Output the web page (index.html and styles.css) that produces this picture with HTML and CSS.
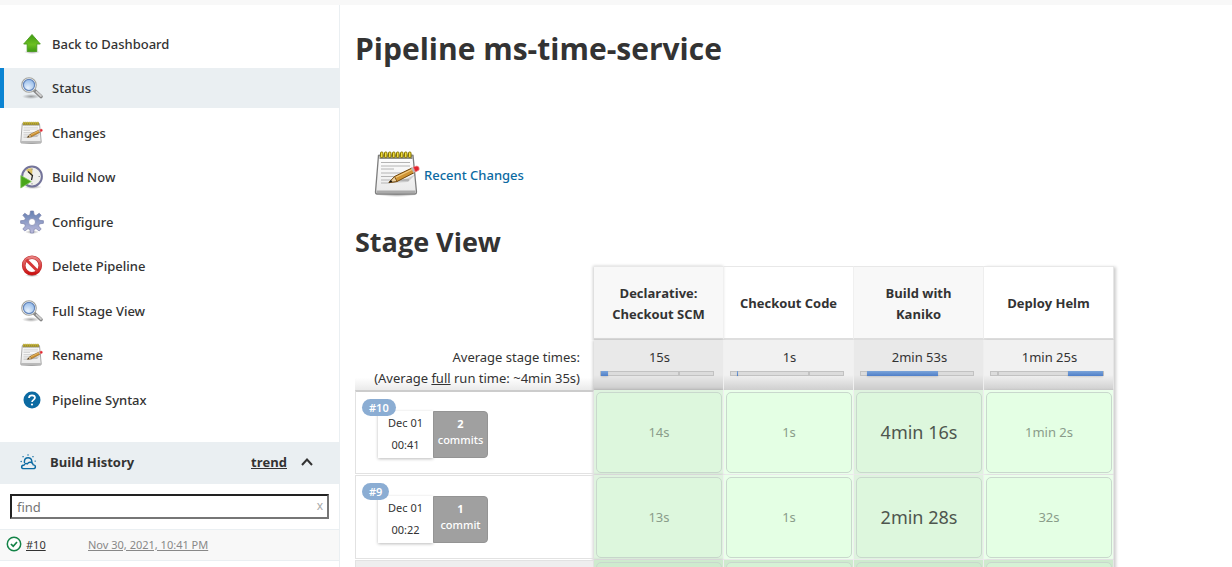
FILE: index.html
```html
<!DOCTYPE html>
<html lang="en">
<head>
<meta charset="utf-8">
<title>Pipeline ms-time-service</title>
<link rel="stylesheet" href="styles.css">
</head>
<body>
<svg class="defs" aria-hidden="true">
  <defs>
    <linearGradient id="g-arrow" x1="0" y1="0" x2="0" y2="1"><stop offset="0" stop-color="#3f9a12"/><stop offset=".6" stop-color="#6cc022"/><stop offset="1" stop-color="#3d9a12"/></linearGradient>
    <linearGradient id="g-paper" x1="0" y1="0" x2="0" y2="1"><stop offset="0" stop-color="#fff"/><stop offset="1" stop-color="#e8e8e8"/></linearGradient>
    <linearGradient id="g-gear" x1="0" y1="0" x2="0" y2="1"><stop offset="0" stop-color="#6480b2"/><stop offset="1" stop-color="#bdbbdc"/></linearGradient>
    <linearGradient id="g-red" x1="0" y1="0" x2="0" y2="1"><stop offset="0" stop-color="#e88080"/><stop offset="1" stop-color="#cc1212"/></linearGradient>
    <radialGradient id="g-lens" cx=".4" cy=".75" r=".8"><stop offset="0" stop-color="#e8f2fd"/><stop offset="1" stop-color="#8db6e8"/></radialGradient>
    <radialGradient id="g-shade"><stop offset="0" stop-color="#000" stop-opacity=".35"/><stop offset="1" stop-color="#000" stop-opacity="0"/></radialGradient>
    <symbol id="i-search" viewBox="0 0 24 24">
      <ellipse cx="11" cy="20.500" rx="9" ry="2.500" fill="url(#g-shade)"/>
      <path d="M14.500 14.500L21 20.500" stroke="#858585" stroke-width="3.600" stroke-linecap="round"/>
      <path d="M16.500 15.800L21 20" stroke="#cfcfcf" stroke-width="1.800" stroke-linecap="round"/>
      <circle cx="9" cy="9" r="7.300" fill="#fff" stroke="#a3a39d" stroke-width="1.100"/>
      <circle cx="9" cy="9" r="5.600" fill="url(#g-lens)" stroke="#6587bc" stroke-width="1.200"/>
    </symbol>
    <symbol id="i-notepad" viewBox="0 0 48 48">
      <ellipse cx="23" cy="44.500" rx="20" ry="2.500" fill="url(#g-shade)"/>
      <path d="M4.500 5.500H39L42.500 42Q42.500 44 41 44H3Q1.500 44 1.500 42Z" fill="url(#g-paper)" stroke="#7d7d7d" stroke-width="1.300"/>
      <path d="M5.500 4.500H38.500V9H5.500Z" fill="#8d8d86"/>
      <path d="M2.500 40.500H41.500V43H2.500Z" fill="#aaa"/>
      <path d="M7 12.500H36M7 16H36M7 19H20M7 23H35M7 26.500H23M7 30H35M7 33H16" stroke="#b4b4b4" stroke-width="1"/>
      <g fill="#f0dc3c" stroke="#857300" stroke-width="1"><rect x="6.500" y="2" width="2.500" height="5.500" rx="1"/><rect x="10.500" y="2" width="2.500" height="5.500" rx="1"/><rect x="14.500" y="2" width="2.500" height="5.500" rx="1"/><rect x="18.500" y="2" width="2.500" height="5.500" rx="1"/><rect x="22.500" y="2" width="2.500" height="5.500" rx="1"/><rect x="26.500" y="2" width="2.500" height="5.500" rx="1"/><rect x="30.500" y="2" width="2.500" height="5.500" rx="1"/><rect x="34.500" y="2" width="2.500" height="5.500" rx="1"/></g>
      <path d="M16 33L34 32L42 24L34 28Z" fill="#000" opacity=".15"/>
      <path d="M15 32.500L20.500 26.500L38 18L40.500 22.500L23 31.500Z" fill="#cf9434" stroke="#70460c" stroke-width="1"/>
      <path d="M21.500 27.500L38 19.500" stroke="#f3cc83" stroke-width="1.200"/>
      <path d="M15 32.500L20.500 26.500L23 31.500Z" fill="#e9cfa0" stroke="#70460c" stroke-width=".8"/>
      <path d="M15 32.500L17 30L18.300 32Z" fill="#111"/>
      <path d="M37 18L39.500 23L41.500 22L39.200 17Z" fill="#bbb"/>
      <path d="M39.200 17L43 16Q45.800 16.500 45 20L41.500 22Z" fill="#e2232d" stroke="#f08080" stroke-width=".7"/>
    </symbol>
  </defs>
</svg>
<div class="topbar"></div>
<div class="layout">
  <aside class="side">
    <nav class="tasks" aria-label="Tasks">
      <a class="task" href="#">
        <svg class="icon" viewBox="0 0 24 24"><ellipse cx="12" cy="20" rx="8" ry="2" fill="url(#g-shade)"/><path d="M12 2.500L20.300 12H16.800V19.500H7.200V12H3.700Z" fill="url(#g-arrow)" stroke="#4a9a1e" stroke-width=".9"/></svg>
        Back to Dashboard</a>
      <a class="task active" href="#" aria-current="page"><svg class="icon"><use href="#i-search"/></svg>Status</a>
      <a class="task" href="#"><svg class="icon"><use href="#i-notepad"/></svg>Changes</a>
      <a class="task" href="#">
        <svg class="icon" viewBox="0 0 24 24"><ellipse cx="13" cy="22" rx="9" ry="2" fill="url(#g-shade)"/><circle cx="12" cy="11.500" r="9.900" fill="#efefec" stroke="#74749a" stroke-width="2"/><path d="M12 11.500L6 5Q9 2.500 12.500 3.500Z" fill="#dcc166"/><path d="M8 6.500L12.500 10.500L11.500 15" fill="none" stroke="#222" stroke-width="1.200"/><path d="M18.500 11.500H20M12 18V19.500M12 3.500V5" stroke="#999"/><path d="M.8 10.500L11.300 16.500L.8 23Z" fill="#49a61b" stroke="#84c75c" stroke-width=".8"/></svg>
        Build Now</a>
      <a class="task" href="#">
        <svg class="icon" viewBox="0 0 24 24"><ellipse cx="12" cy="22" rx="7" ry="2" fill="url(#g-shade)"/><path fill="url(#g-gear)" stroke="#7d82ac" stroke-width=".7" fill-rule="evenodd" d="M10.500 1H13.500L14.100 4.800L16 5.600L19.200 3.200L21.200 5.200L18.600 8.200L19.400 10.300L23.400 10.700V13.300L19.400 13.900L18.600 16L21.200 19L19.200 21L16 18.600L14.100 19.400L13.500 23H10.500L9.900 19.400L8 18.600L4.800 21L2.800 19L5.400 16L4.600 13.900L.6 13.300V10.700L4.600 10.300L5.400 8.200L2.800 5.200L4.800 3.200L8 5.600L9.900 4.800ZM12 8.500A3.500 3.500 0 1 0 12 15.500A3.500 3.500 0 1 0 12 8.500Z"/></svg>
        Configure</a>
      <a class="task" href="#">
        <svg class="icon" viewBox="0 0 24 24"><ellipse cx="12" cy="21.500" rx="7" ry="1.500" fill="url(#g-shade)"/><circle cx="12" cy="11.500" r="8.300" fill="#fff" stroke="#bf3030" stroke-width="3.600"/><circle cx="12" cy="11.500" r="8.300" fill="none" stroke="url(#g-red)" stroke-width="2.600"/><path d="M6.200 5.700L17.800 17.300" stroke="#d63838" stroke-width="3"/></svg>
        Delete Pipeline</a>
      <a class="task" href="#"><svg class="icon"><use href="#i-search"/></svg>Full Stage View</a>
      <a class="task" href="#"><svg class="icon"><use href="#i-notepad"/></svg>Rename</a>
      <a class="task" href="#">
        <svg class="icon" viewBox="0 0 24 24"><circle cx="12" cy="12" r="8.500" fill="#0b6aa2"/><path d="M9 10Q9 7.300 12 7.300T15 9.800C15 11.700 12 12 12 14" fill="none" stroke="#fff" stroke-width="1.700"/><circle cx="12" cy="16.500" r="1.100" fill="#fff"/></svg>
        Pipeline Syntax</a>
    </nav>
    <section class="history">
      <div class="history-head">
        <svg class="weather" viewBox="0 0 18 18"><g fill="none" stroke="#0b6aa2" stroke-width="1.500" stroke-linecap="round" stroke-linejoin="round"><path d="M4 15.500H14Q16.300 15.500 16.300 13.500T14 11.500C13.500 8.500 9.500 7.500 7.800 10.500Q5.500 9.300 4.500 11.700Q1.700 12 1.700 13.700T4 15.500Z"/><path d="M4.700 9V7.500Q5 4 8.500 4T12.500 7.500V8.500"/><path d="M1.200 8H1.300M3.200 2.800H3.300M8.500 .9V1M13.700 2.800H13.800M16 7.500H16.100"/></g></svg>
        <h2 class="history-title">Build History</h2>
        <a class="trend" href="#">trend</a>
        <button class="collapse" type="button" aria-label="Collapse"><svg viewBox="0 0 12 12"><path d="M1 9L6 3.500L11 9" fill="none" stroke="#333" stroke-width="2"/></svg></button>
      </div>
      <div class="search">
        <input class="find" type="text" placeholder="find" aria-label="Find builds">
        <button class="clear" type="button" aria-label="Clear">x</button>
      </div>
      <div class="build">
        <svg class="ok" viewBox="0 0 16 16"><circle cx="8" cy="8" r="6.700" fill="#fff" stroke="#138347" stroke-width="1.500"/><path d="M4.900 8L7.200 10.200L11 6" fill="none" stroke="#138347" stroke-width="1.700"/></svg>
        <a class="build-no" href="#">#10</a>
        <a class="build-date" href="#">Nov 30, 2021, 10:41 PM</a>
      </div>
    </section>
  </aside>
  <main class="main">
    <h1 class="title">Pipeline ms-time-service</h1>
    <div class="recent"><svg class="recent-icon"><use href="#i-notepad"/></svg><a class="recent-link" href="#">Recent Changes</a></div>
    <h2 class="subtitle">Stage View</h2>
    <table class="stages">
      <thead>
        <tr class="names"><td></td><th scope="col">Declarative: Checkout SCM</th><th scope="col">Checkout Code</th><th scope="col">Build with Kaniko</th><th scope="col">Deploy Helm</th></tr>
        <tr class="averages">
          <th scope="row">Average stage times:<br>(Average <u>full</u> run time: ~4min 35s)</th>
          <td>15s<div class="bar"><i class="tick" style="left:69%"></i><i class="fill" style="left:0;width:6%"></i></div></td>
          <td>1s<div class="bar"><i class="tick" style="left:69%"></i><i class="fill" style="left:5%;width:1%"></i></div></td>
          <td>2min 53s<div class="bar"><i class="fill" style="left:5%;width:64%"></i></div></td>
          <td>1min 25s<div class="bar"><i class="tick" style="left:5%"></i><i class="fill" style="left:69%;width:31%"></i></div></td>
        </tr>
      </thead>
      <tbody>
        <tr class="run">
          <th scope="row"><div class="run-box"><span class="badge">#10</span><div class="date">Dec 01<br>00:41</div><div class="commits"><b>2</b>commits</div></div></th>
          <td><div class="cell">14s</div></td><td><div class="cell">1s</div></td><td><div class="cell long">4min 16s</div></td><td><div class="cell">1min 2s</div></td>
        </tr>
        <tr class="run">
          <th scope="row"><div class="run-box"><span class="badge">#9</span><div class="date">Dec 01<br>00:22</div><div class="commits"><b>1</b>commit</div></div></th>
          <td><div class="cell">13s</div></td><td><div class="cell">1s</div></td><td><div class="cell long">2min 28s</div></td><td><div class="cell">32s</div></td>
        </tr>
        <tr class="run dim">
          <th><div class="run-box"></div></th>
          <td><div class="cell"></div></td><td><div class="cell"></div></td><td><div class="cell"></div></td><td><div class="cell"></div></td>
        </tr>
      </tbody>
    </table>
  </main>
</div>
</body>
</html>
```
FILE: styles.css
```css
* { box-sizing: border-box; }
body {
  margin: 0;
  height: 100vh;
  overflow: hidden;
  display: flex;
  flex-direction: column;
  background: #fff;
  color: #333;
  font: 13px/21px "Noto Sans", "Open Sans", sans-serif;
}
h1, h2 { margin: 0; font-weight: 700; }
h1, h2, .names, .trend { font-family: "Open Sans", "Noto Sans", sans-serif; }
a { color: inherit; }
button { border: 0; padding: 0; background: none; font: inherit; color: inherit; }
.defs { position: absolute; width: 0; height: 0; }
.topbar { flex: none; height: 5px; background: #f8f8f8; }
.layout { flex: 1; min-height: 0; display: flex; }

.side { flex: none; width: 340px; padding-top: 19px; border-right: 1px solid #eaeff2; }
.tasks { display: flex; flex-direction: column; gap: 4px; margin-bottom: 22px; }
.task {
  display: flex;
  align-items: center;
  gap: 8px;
  height: 40px;
  padding-left: 16px;
  border-left: 4px solid transparent;
  font-weight: 500;
  text-decoration: none;
}
.task:nth-child(even) { margin-bottom: 1px; }
.task.active { background: #eaeff2; border-left-color: #0b84d3; }
.icon { width: 24px; height: 24px; }

.history-head { display: flex; align-items: center; height: 42px; padding: 0 26px 2px 20px; background: #eaeff2; }
.weather { width: 17px; height: 17px; margin-right: 13px; }
.history-title { flex: 1; font-size: 13px; }
.trend { font-weight: 700; margin-right: 14px; }
.collapse { display: flex; width: 12px; height: 12px; }
.search { position: relative; display: flex; padding: 10px; }
.find {
  width: 100%;
  height: 25px;
  padding: 0 20px 0 5px;
  border: 2px solid;
  border-color: #222 #767676 #767676 #222;
  font: inherit;
  background: #fff;
}
.find::placeholder { color: #757575; }
.clear { position: absolute; top: 11px; right: 16px; color: #aaa; font-size: 12px; }
.build { display: flex; align-items: center; height: 32px; padding: 0 0 2px 6px; background: #f8f8f8; border: 1px solid #eaeff2; border-width: 1px 0; font-size: 11px; }
.ok { width: 16px; height: 16px; margin-right: 4px; }
.build-no { width: 62px; }
.build-date { color: #888; }

.main { flex: 1; min-width: 0; padding: 24px 15px 0; }
.title { font-size: 30px; line-height: 40px; }
.recent { display: flex; align-items: center; margin-top: 81px; padding-left: 19px; gap: 2px; }
.recent-icon { width: 48px; height: 48px; }
.recent-link { padding-top: 2px; color: #0b6aa2; font-weight: 500; text-decoration: none; }
.subtitle { margin-top: 24px; font-size: 27px; line-height: 40px; }

.stages { margin-top: 4px; width: 759px; table-layout: fixed; border-spacing: 0; }
.stages td, .stages th { padding: 0; text-align: center; }
.stages tr > :first-child { width: 239px; }
.stages tr > :nth-child(n+2) { border-right: 1px solid #f0f0f0; }
.stages tr > :nth-child(2) { box-shadow: -1px 0 3px #0003; }
.stages tr > :last-child { border-right-color: #e6e6e6; box-shadow: 2px 1px 3px #0003; }
.names th { height: 74px; border-top: 1px solid #e8e8e8; border-bottom: 2px solid #dedede; }
.stages .names th { padding: 2px 14px 0; }
.names th:nth-child(even) { background: #f8f8f8; }
.averages > * { height: 50px; vertical-align: top; font-weight: 400; }
.averages th { background: linear-gradient(#fff 75%, #eaeaea); }
.averages td { background: linear-gradient(#f1f1f1 70%, #cfcfcf); }
.averages td:nth-child(even) { background: linear-gradient(#e9e9e9 70%, #cbcbcb); }
.stages .averages th { padding: 7px 14px 0 0; text-align: right; }
.stages .averages td { padding: 7px 4px 0 6px; }
.bar { position: relative; height: 5px; margin: 3px 5px 0 0; background: #dcdcdc; border: 1px solid #c2c2c2; }
.fill, .tick { position: absolute; top: -1px; height: 5px; }
.tick { width: 2px; background: #c2c2c2; }
.fill { background: linear-gradient(#7ba4d9, #4f7fc9); box-shadow: 0 1px 2px #0002; }

.run th { font-weight: 400; text-align: left; vertical-align: top; }
.run-box { position: relative; display: flex; align-items: flex-start; min-height: 84px; margin-bottom: 1px; padding: 20px 0 0 22px; border: 1px solid #e2e2e2; text-align: center; }
.run:first-child .run-box { border-top: 2px solid #ccc; padding-top: 19px; }
.badge { position: absolute; top: 7px; left: 6px; padding: 0 7px; border-radius: 9px; background: #8badd3; color: #fff; font-size: 11px; font-weight: 600; line-height: 17px; }
.date { width: 55px; height: 47px; padding-top: 1px; font-size: 11px; line-height: 22px; background: #fff; box-shadow: 0 1px 3px #0004; }
.commits { display: flex; flex-direction: column; width: 55px; height: 47px; padding-top: 4px; border: 1px solid #949494; border-radius: 0 4px 4px 0; background: #a0a0a0; color: #fff; font-size: 11px; line-height: 16px; font-weight: 500; }
.stages .run td { padding: 2px 1px 1px 2px; background: #eaffea; border-bottom: 1px solid #eaeaea; }
.stages .run td:nth-child(even) { background: #dff3df; }
.cell { display: flex; align-items: center; justify-content: center; height: 81px; border: 1px solid #c9d8cd; border-radius: 5px; background: #e4ffe4; color: #8a9c8a; }
td:nth-child(even) .cell { background: #ddf7dd; }
.cell.long { font-size: 18px; color: #4e564e; }
.stages .dim th .run-box { background: #eee; }
.stages .dim td, .stages .dim td:nth-child(even), .stages .dim td:nth-child(even) .cell { background: #ceebce; }
.dim .cell { background: #d5f2d5; }
```
